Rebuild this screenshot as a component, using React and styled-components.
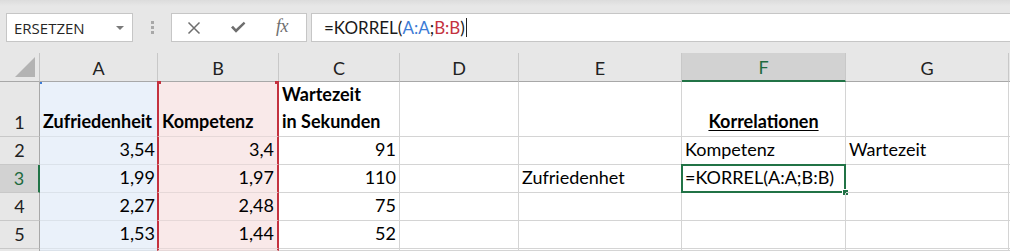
import React from 'react';
import styled, { createGlobalStyle, css } from 'styled-components';

const GlobalStyle = createGlobalStyle`
  html, body {
    margin: 0;
    padding: 0;
    background: #ffffff;
  }
  body {
    font-family: Lato, "Open Sans", sans-serif;
    width: 1010px;
    height: 251px;
    overflow: hidden;
  }
`;

const CELL_FONT = 'Lato, "Open Sans", sans-serif';
const UI_FONT = '"Open Sans", "Noto Sans", sans-serif';

const COLS = [
  { key: 'A', width: 118, tint: 'blue' },
  { key: 'B', width: 121, tint: 'red' },
  { key: 'C', width: 121 },
  { key: 'D', width: 119 },
  { key: 'E', width: 163 },
  { key: 'F', width: 164, selected: true },
  { key: 'G', width: 163 },
];

const ROW_HEIGHTS = [55, 28, 28, 28, 28, 2];

/* formula bar */

const Toolbar = styled.div`
  height: 53px;
  box-sizing: border-box;
  padding-top: 13px;
  display: flex;
  align-items: flex-start;
  background: linear-gradient(#dcdcdc 0px, #e7e7e7 6px, #e7e7e7 100%);
`;

const NameBox = styled.div`
  margin-left: 6px;
  width: 127px;
  height: 29px;
  box-sizing: border-box;
  border: 1px solid #c6c6c6;
  background: #ffffff;
  display: flex;
  align-items: center;
  justify-content: space-between;
  padding: 0 8px 0 7px;
  font-family: ${UI_FONT};
  font-size: 15px;
  color: #262626;
`;

const Caret = styled.span`
  width: 0;
  height: 0;
  border-left: 4px solid transparent;
  border-right: 4px solid transparent;
  border-top: 4px solid #7a7a7a;
  margin-top: 1px;
`;

const Grip = styled.div`
  width: 38px;
  height: 29px;
  display: flex;
  flex-direction: column;
  align-items: center;
  justify-content: center;
  gap: 2px;

  span {
    width: 3px;
    height: 3px;
    background: #a8a8a8;
  }
`;

const ButtonGroup = styled.div`
  width: 136px;
  height: 29px;
  box-sizing: border-box;
  border: 1px solid #c6c6c6;
  background: #ffffff;
  display: flex;
  align-items: center;
`;

const IconButton = styled.div`
  width: 44px;
  height: 27px;
  display: flex;
  align-items: center;
  justify-content: center;
  color: #6e6e6e;
`;

const FxLabel = styled.span`
  font-family: "Liberation Serif", "DejaVu Serif", serif;
  font-style: italic;
  font-size: 18px;
  color: #6e6e6e;
  margin-top: -2px;
  letter-spacing: -0.5px;
`;

const FormulaInput = styled.div`
  margin-left: 4px;
  flex: 1;
  height: 29px;
  box-sizing: border-box;
  border: 1px solid #c6c6c6;
  border-right: none;
  background: #ffffff;
  display: flex;
  align-items: center;
  padding-left: 12px;
  font-family: ${CELL_FONT};
  font-size: 17px;
  color: #1a1a1a;
`;

const Ref = styled.span`
  color: ${(p) => (p.$tone === 'blue' ? '#3c7bd6' : '#c4323f')};
`;

const TextCursor = styled.span`
  display: inline-block;
  width: 1px;
  height: 19px;
  background: #222;
  margin-left: 1px;
`;

/* sheet */

const Sheet = styled.div`
  display: grid;
  grid-template-columns: 40px ${COLS.map((c) => `${c.width}px`).join(' ')} 1fr;
  grid-template-rows: 29px ${ROW_HEIGHTS.map((h) => `${h}px`).join(' ')};
  font-family: ${CELL_FONT};
  font-size: 18px;
  color: #000;
`;

const Corner = styled.div`
  background: #e7e7e7;
  border-right: 1px solid #c4c4c4;
  border-bottom: 1px solid #a8a8a8;
  box-sizing: border-box;
  display: flex;
  align-items: flex-end;
  justify-content: flex-end;
  padding: 0 4px 4px 0;

  span {
    width: 0;
    height: 0;
    border-left: 20px solid transparent;
    border-bottom: 20px solid #b3b3b3;
  }
`;

const ColHeader = styled.div`
  background: ${(p) => (p.$selected ? '#d2d2d2' : '#e7e7e7')};
  box-sizing: border-box;
  border-right: 1px solid #c8c8c8;
  border-bottom: ${(p) => (p.$selected ? '2px solid #217346' : '1px solid #a8a8a8')};
  display: flex;
  align-items: center;
  justify-content: center;
  padding-top: 1px;
  font-size: 18px;
  color: ${(p) => (p.$selected ? '#1f6b3f' : '#222')};
`;

const HeaderFill = styled.div`
  background: #e7e7e7;
  border-bottom: 1px solid #a8a8a8;
`;

const RowHeader = styled.div`
  background: ${(p) => (p.$selected ? '#d2d2d2' : '#e7e7e7')};
  box-sizing: border-box;
  border-right: ${(p) => (p.$selected ? '2px solid #217346' : '1px solid #a8a8a8')};
  border-bottom: 1px solid #c8c8c8;
  display: flex;
  align-items: flex-end;
  justify-content: center;
  padding-bottom: 2px;
  font-size: 18px;
  line-height: 24px;
  overflow: hidden;
  color: ${(p) => (p.$selected ? '#1f6b3f' : '#222')};
`;

const tints = {
  blue: css`
    background: #eaf1fa;
    border-bottom-color: #dbe2ea;
    border-right: none;
  `,
  red: css`
    background: #f9e9e9;
    border-bottom-color: #e6d8d8;
    border-left: 2px solid #c4323f;
    border-right: 2px solid #c4323f;
    margin-left: -1px;
  `,
};

const Cell = styled.div`
  position: relative;
  box-sizing: border-box;
  border-right: 1px solid #d4d4d4;
  border-bottom: 1px solid #d4d4d4;
  display: flex;
  flex-direction: column;
  justify-content: flex-end;
  align-items: ${(p) =>
    p.$align === 'right' ? 'flex-end' : p.$align === 'center' ? 'center' : 'flex-start'};
  padding: 0 3px 1px 3px;
  white-space: nowrap;
  overflow: ${(p) => (p.$clip ? 'hidden' : 'visible')};
  font-weight: ${(p) => (p.$bold ? 700 : 400)};
  text-decoration: ${(p) => (p.$underline ? 'underline' : 'none')};
  text-underline-offset: 2px;
  line-height: 27px;
  ${(p) => p.$tint && tints[p.$tint]}
`;

const Lines = styled.span`
  line-height: 27px;
`;

const Marker = styled.span`
  position: absolute;
  top: -1px;
  width: 4px;
  height: 3px;
  background: ${(p) => p.$color};
  ${(p) => (p.$side === 'left' ? 'left: -2px;' : 'right: -2px;')}
`;

const ActiveFrame = styled.span`
  position: absolute;
  left: -1px;
  top: -1px;
  right: -1px;
  bottom: -1px;
  border: 2px solid #217346;
  pointer-events: none;

  &::after {
    content: '';
    position: absolute;
    right: -4px;
    bottom: -4px;
    width: 5px;
    height: 5px;
    background: #217346;
    border: 1px solid #fff;
    border-right: none;
    border-bottom: none;
  }
`;

const RowEnd = styled.div`
  border-bottom: 1px solid #d4d4d4;
`;

const data = {
  1: {
    A: { text: 'Zufriedenheit', bold: true, clip: true },
    B: { text: 'Kompetenz', bold: true },
    C: { text: ['Wartezeit', 'in Sekunden'], bold: true },
    F: { text: 'Korrelationen', bold: true, underline: true, align: 'center' },
  },
  2: {
    A: { text: '3,54', align: 'right' },
    B: { text: '3,4', align: 'right' },
    C: { text: '91', align: 'right' },
    F: { text: 'Kompetenz' },
    G: { text: 'Wartezeit' },
  },
  3: {
    A: { text: '1,99', align: 'right' },
    B: { text: '1,97', align: 'right' },
    C: { text: '110', align: 'right' },
    E: { text: 'Zufriedenhet' },
    F: { text: '=KORREL(A:A;B:B)', active: true },
  },
  4: {
    A: { text: '2,27', align: 'right' },
    B: { text: '2,48', align: 'right' },
    C: { text: '75', align: 'right' },
  },
  5: {
    A: { text: '1,53', align: 'right' },
    B: { text: '1,44', align: 'right' },
    C: { text: '52', align: 'right' },
  },
  6: {},
};

const CancelIcon = () => (
  <svg width="14" height="14" viewBox="0 0 14 14">
    <path d="M1.5 1.5 L12.5 12.5 M12.5 1.5 L1.5 12.5" stroke="currentColor" strokeWidth="1.5" fill="none" />
  </svg>
);

const CheckIcon = () => (
  <svg width="16" height="13" viewBox="0 0 16 13">
    <path d="M1 6.5 L3 4.8 L6 8 L13.8 0.8 L15.4 2.4 L6 11.8 Z" fill="currentColor" />
  </svg>
);

const App = () => {
  const rows = Object.keys(data).map(Number);

  return (
    <>
      <GlobalStyle />
      <Toolbar>
        <NameBox>
          ERSETZEN
          <Caret />
        </NameBox>
        <Grip>
          <span />
          <span />
          <span />
        </Grip>
        <ButtonGroup>
          <IconButton>
            <CancelIcon />
          </IconButton>
          <IconButton>
            <CheckIcon />
          </IconButton>
          <IconButton>
            <FxLabel>fx</FxLabel>
          </IconButton>
        </ButtonGroup>
        <FormulaInput>
          =KORREL(<Ref $tone="blue">A:A</Ref>;<Ref $tone="red">B:B</Ref>)
          <TextCursor />
        </FormulaInput>
      </Toolbar>

      <Sheet>
        <Corner>
          <span />
        </Corner>
        {COLS.map((c) => (
          <ColHeader key={c.key} $selected={c.selected}>
            {c.key}
          </ColHeader>
        ))}
        <HeaderFill />

        {rows.map((r) => (
          <React.Fragment key={r}>
            <RowHeader $selected={r === 3}>{r < 6 ? r : ''}</RowHeader>
            {COLS.map((c) => {
              const cell = data[r][c.key] || {};
              return (
                <Cell
                  key={c.key}
                  $tint={c.tint}
                  $align={cell.align}
                  $bold={cell.bold}
                  $underline={cell.underline}
                  $clip={cell.clip}
                >
                  {r === 1 && c.tint === 'blue' && <Marker $side="left" $color="#3c7bd6" />}
                  {r === 1 && c.tint === 'red' && (
                    <>
                      <Marker $side="left" $color="#c4323f" />
                      <Marker $side="right" $color="#c4323f" />
                    </>
                  )}
                  {Array.isArray(cell.text)
                    ? cell.text.map((t) => <Lines key={t}>{t}</Lines>)
                    : cell.text}
                  {cell.active && <ActiveFrame />}
                </Cell>
              );
            })}
            <RowEnd />
          </React.Fragment>
        ))}
      </Sheet>
    </>
  );
};

export default App;
